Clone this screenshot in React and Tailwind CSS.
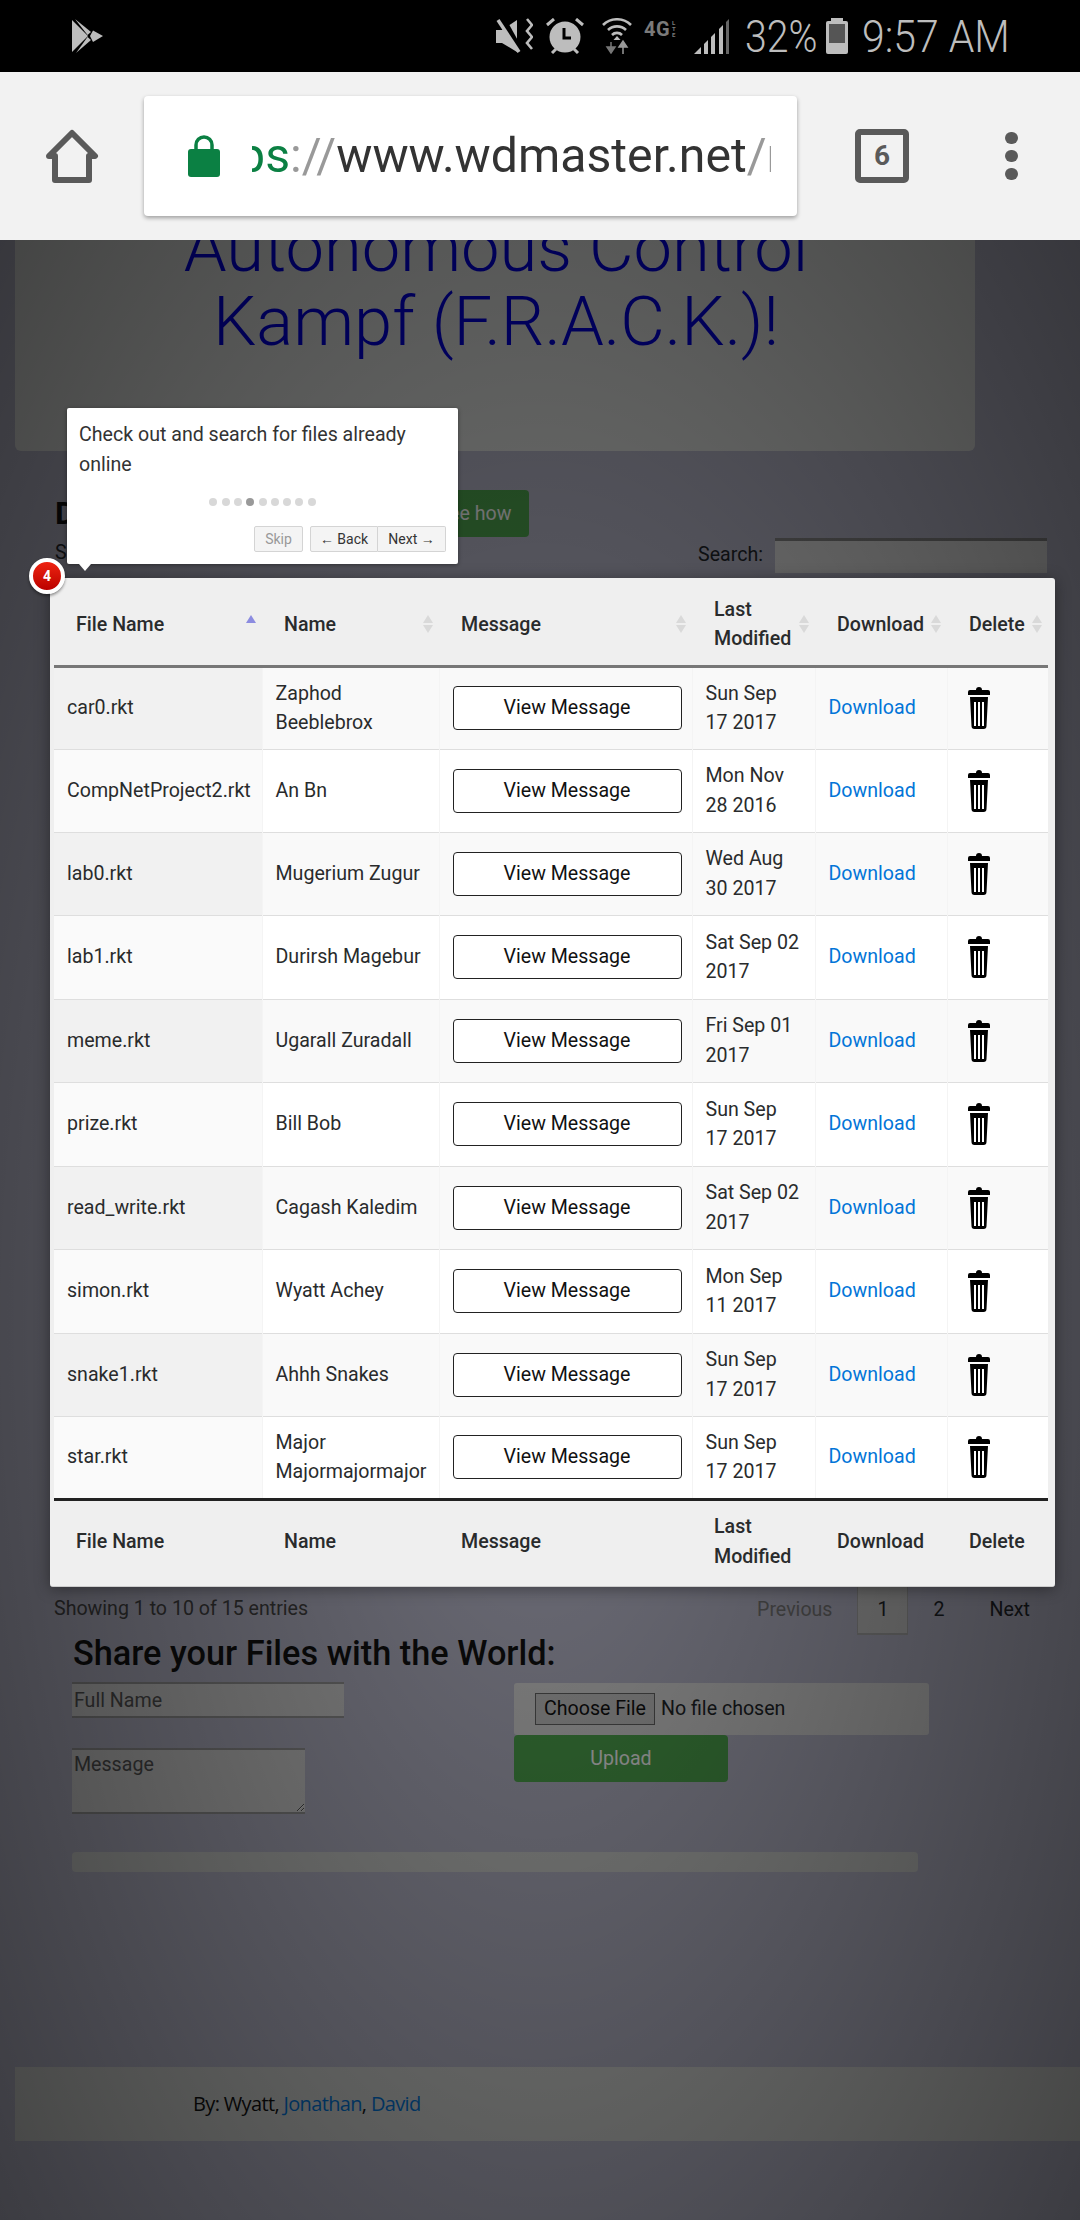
import React from 'react'

const rows = [
  ['car0.rkt', 'Zaphod Beeblebrox', 'Sun Sep 17 2017'],
  ['CompNetProject2.rkt', 'An Bn', 'Mon Nov 28 2016'],
  ['lab0.rkt', 'Mugerium Zugur', 'Wed Aug 30 2017'],
  ['lab1.rkt', 'Durirsh Magebur', 'Sat Sep 02 2017'],
  ['meme.rkt', 'Ugarall Zuradall', 'Fri Sep 01 2017'],
  ['prize.rkt', 'Bill Bob', 'Sun Sep 17 2017'],
  ['read_write.rkt', 'Cagash Kaledim', 'Sat Sep 02 2017'],
  ['simon.rkt', 'Wyatt Achey', 'Mon Sep 11 2017'],
  ['snake1.rkt', 'Ahhh Snakes', 'Sun Sep 17 2017'],
  ['star.rkt', 'Major Majormajormajor', 'Sun Sep 17 2017'],
]

const headers = ['File Name', 'Name', 'Message', 'Last Modified', 'Download', 'Delete']

function SortArrows({ active }) {
  return (
    <svg className="w-[10px] h-[18px] shrink-0" viewBox="0 0 10 18">
      <path d="M5 0L10 8H0Z" fill={active ? '#8c8ce0' : '#d9d9d9'} />
      {!active && <path d="M5 18L10 10H0Z" fill="#d9d9d9" />}
    </svg>
  )
}

function Trash() {
  return (
    <svg className="w-[22px] h-[42px] block" viewBox="0 0 22 42">
      <path d="M8 3a3 3 0 0 1 6 0h6a2 2 0 0 1 2 2v3H0V5a2 2 0 0 1 2-2Z" fill="#000" />
      <path d="M2 10h18l-1.5 29a3 3 0 0 1-3 3h-9a3 3 0 0 1-3-3Z" fill="#000" />
      <path d="M6 15h2v24H6ZM10 15h2v24h-2ZM14 15h2v24h-2Z" fill="#fff" />
    </svg>
  )
}

function StatusBar() {
  return (
    <div className="h-[72px] bg-black flex items-center pl-[72px] pr-[74px] text-[#bdbdbd]">
      <svg className="w-[31px] h-[34px]" viewBox="0 0 31 34" fill="#bdbdbd">
        <path d="M0 1L16 17L0 33Z" />
        <path d="M3 0L19 13L15.5 16Z" />
        <path d="M21 11.5L31 17L21 23L18 17Z" />
        <path d="M4 34L19 21L15.5 18Z" />
      </svg>
      <div className="ml-auto flex items-center">
        <svg className="w-[37px] h-[36px]" viewBox="0 0 37 36" fill="none">
          <path d="M0 12h6L21 2v32L6 25H0Z" fill="#bdbdbd" />
          <path d="M6 0L26 36" stroke="#000" strokeWidth="6" />
          <path d="M2 2L23 34" stroke="#bdbdbd" strokeWidth="3.5" />
          <path d="M31 1l5 6-5 6 5 6-5 6 5 6" stroke="#bdbdbd" strokeWidth="2.6" />
        </svg>
        <svg className="w-[38px] h-[36px] ml-[13px]" viewBox="0 0 38 36" fill="none">
          <circle cx="19" cy="19" r="15.5" fill="#bdbdbd" />
          <path d="M18 10v10h7" stroke="#000" strokeWidth="3" />
          <path d="M1 7l7-6M37 7l-7-6M6 35l4-4M32 35l-4-4" stroke="#bdbdbd" strokeWidth="3" />
        </svg>
        <svg className="w-[30px] h-[36px] ml-[18px]" viewBox="0 0 30 36" fill="none">
          <path d="M1 7a20 20 0 0 1 28 0M6 12a13 13 0 0 1 18 0M10 17a7 7 0 0 1 10 0" stroke="#bdbdbd" strokeWidth="2.6" />
          <path d="M15 18l3.5 4h-7Z" fill="#bdbdbd" />
          <path d="M9 24v7M5 29h8l-4 6Z" fill="#777" stroke="#777" strokeWidth="1.5" />
          <path d="M21 36v-9M17 29h8l-4-6Z" fill="#999" stroke="#999" strokeWidth="1.5" />
        </svg>
        <div className="ml-[12px] w-[41px] h-[18px] -mt-[14px] flex items-center text-[#7a7a7a]">
          <span className="font-bold text-[20px] leading-[18px] tracking-[0.5px]">4G</span>
          <span className="flex flex-col text-[6px] leading-[6px] font-bold ml-[2px]">
            <span>L</span>
            <span>T</span>
            <span>E</span>
          </span>
        </div>
        <svg className="w-[35px] h-[35px] ml-[9px]" viewBox="0 0 35 35">
          <path d="M0 35L7 28V35Z" fill="#bdbdbd" />
          <path d="M10 25l4-4v14h-4ZM17 18l4-4v21h-4Z" fill="#bdbdbd" />
          <path d="M25 10l4-4v29h-4Z" fill="#bdbdbd" />
          <path d="M32 3l3-3v35h-3Z" fill="#666" />
        </svg>
        <span className="ml-[16px] w-[70px] block text-[45px] leading-[45px] font-light">
          <span className="inline-block origin-left scale-x-[0.87] whitespace-nowrap">32%</span>
        </span>
        <div className="ml-[11px] w-[22px] h-[36px] flex flex-col items-center">
          <div className="w-[12px] h-[3px] bg-[#bdbdbd]" />
          <div className="w-[22px] h-[33px] bg-[#bdbdbd] rounded-[2px] pt-[3px] px-[3px]">
            <div className="h-[19px] bg-[#555]" />
          </div>
        </div>
        <span className="ml-[14px] w-[144px] block text-[45px] leading-[45px] font-light">
          <span className="inline-block origin-left scale-x-[0.91] whitespace-nowrap">9:57 AM</span>
        </span>
      </div>
    </div>
  )
}

function BrowserBar() {
  return (
    <div className="h-[168px] bg-[#f2f2f2] flex items-center relative z-40">
      <svg className="w-[54px] h-[54px] ml-[45px]" viewBox="0 0 54 54" fill="none">
        <path d="M27 4L50 27H44V51H10V27H4Z" stroke="#5a5a5a" strokeWidth="6" strokeLinejoin="round" />
      </svg>
      <div className="ml-[45px] w-[653px] h-[120px] bg-white rounded-[4px] shadow-[0_2px_4px_rgba(0,0,0,0.35)] flex items-center pl-[44px]">
        <svg className="w-[32px] h-[42px] shrink-0" viewBox="0 0 32 42">
          <path d="M8 16V10a8 8 0 0 1 16 0v6" fill="none" stroke="#0b8043" strokeWidth="3.5" />
          <rect x="0" y="14" width="32" height="28" rx="3" fill="#0b8043" />
        </svg>
        <div className="ml-[32px] w-[519px] overflow-hidden whitespace-nowrap text-[48.2px] leading-[60px] text-[#333]">
          <span className="inline-block -ml-[72px]">
            <span className="text-[#0b8043]">https</span>
            <span className="text-[#999]">://</span>
            www.wdmaster.net
            <span className="text-[#999]">/rkt</span>
          </span>
        </div>
      </div>
      <div className="ml-[58px] w-[54px] h-[54px] border-[6px] border-[#5a5a5a] rounded-[5px] flex items-center justify-center text-[#5a5a5a] font-bold text-[28px] leading-none">
        6
      </div>
      <div className="ml-[96px] flex flex-col items-center gap-[6px]">
        <span className="w-[13px] h-[12px] rounded-full bg-[#5a5a5a]" />
        <span className="w-[13px] h-[12px] rounded-full bg-[#5a5a5a]" />
        <span className="w-[13px] h-[12px] rounded-full bg-[#5a5a5a]" />
      </div>
    </div>
  )
}

function FilesTable() {
  return (
    <div className="relative z-20 ml-[50px] w-[1005px] h-[1009px] bg-[#efefef] rounded-[3px] pl-[4px] border-b border-[#ccc] shadow-[0_2px_15px_rgba(0,0,0,0.4)]">
      <table className="w-[994px] table-fixed border-collapse text-[19.6px] leading-[29.5px] text-[#292b2c]">
        <colgroup>
          <col className="w-[208px]" />
          <col className="w-[177px]" />
          <col className="w-[253px]" />
          <col className="w-[123px]" />
          <col className="w-[132px]" />
          <col className="w-[101px]" />
        </colgroup>
        <thead>
          <tr className="h-[88px] border-b-[3px] border-[#777]">
            {headers.map((h, i) => (
              <th key={h} className="pl-[22px] pr-[6px] pt-[6px] text-left font-medium">
                <div className="flex items-center justify-between">
                  <span>{h}</span>
                  <SortArrows active={i === 0} />
                </div>
              </th>
            ))}
          </tr>
        </thead>
        <tbody>
          {rows.map((r, i) => {
            const odd = i % 2 === 0
            const tall = i === 3 || i === 5 || i === 7
            return (
              <tr
                key={r[0]}
                className={`${tall ? 'h-[84px]' : 'h-[83px]'} ${odd ? 'bg-[#f9f9f9]' : 'bg-white'} border-b border-[#dedede]`}
              >
                <td className={odd ? 'px-[13px] bg-[#f1f1f1]' : 'px-[13px] bg-[#fafafa]'}>{r[0]}</td>
                <td className="px-[13px] border-l border-[#f4f4f4]">{r[1]}</td>
                <td className="px-[13px] border-l border-[#f4f4f4]">
                  <button className="w-[229px] h-[44px] bg-white border-[1.5px] border-[#222] rounded-[4px] text-[#111]">View Message</button>
                </td>
                <td className="px-[13px] border-l border-[#f4f4f4]">{r[2]}</td>
                <td className="px-[13px] border-l border-[#f4f4f4] text-[#0275d8]">Download</td>
                <td className="pl-[20px] border-l border-[#f4f4f4]"><Trash /></td>
              </tr>
            )
          })}
        </tbody>
        <tfoot>
          <tr className="h-[86px] border-t-[3px] border-[#222]">
            {headers.map((h) => (
              <th key={h} className="pl-[22px] pr-[6px] pb-[2px] text-left font-medium">{h}</th>
            ))}
          </tr>
        </tfoot>
      </table>
    </div>
  )
}

function Tour() {
  return (
    <>
      <div className="absolute z-30 left-[67px] top-[168px] w-[391px] h-[156px] bg-white rounded-[2px] shadow-[0_1px_4px_rgba(0,0,0,0.4)] text-[#333]">
        <p className="pt-[12px] pl-[12px] pr-[12px] text-[19.6px] leading-[30px]">Check out and search for files already online</p>
        <div className="flex justify-center gap-[4.3px] mt-[18px]">
          {[0, 1, 2, 3, 4, 5, 6, 7, 8].map((d) => (
            <span key={d} className={d === 3 ? 'w-[8px] h-[8px] rounded-full bg-[#999]' : 'w-[8px] h-[8px] rounded-full bg-[#d8d8d8]'} />
          ))}
        </div>
        <div className="flex justify-end pr-[12px] mt-[20px] text-[14px] leading-[24px]">
          <span className="w-[49px] h-[26px] mr-[7px] bg-[#f4f4f4] border border-[#d4d4d4] rounded-[2px] text-center text-[#999]">Skip</span>
          <span className="w-[68px] h-[26px] bg-[#f4f4f4] border border-[#d4d4d4] rounded-l-[2px] text-center">← Back</span>
          <span className="w-[68px] h-[26px] bg-[#f4f4f4] border border-l-0 border-[#d4d4d4] rounded-r-[2px] text-center">Next →</span>
        </div>
      </div>
      <div className="absolute z-30 left-[79px] top-[324px] w-0 h-0 border-x-[6px] border-x-transparent border-t-[7px] border-t-white" />
      <div className="absolute z-30 left-[29px] top-[318px] w-[36px] h-[36px] rounded-full border-[4px] border-white bg-linear-to-b from-[#ee2211] to-[#bb0000] shadow-[0_2px_3px_rgba(0,0,0,0.4)] flex items-center justify-center text-white font-bold text-[14px]">
        4
      </div>
    </>
  )
}

export default function App() {
  return (
    <div className="w-[1080px] h-[2220px] overflow-hidden font-[Roboto,sans-serif] bg-black">
      <StatusBar />
      <BrowserBar />
      <div className="relative h-[1980px] bg-[#b9b9cb] text-[#212529] overflow-hidden">
        {/* tour overlay dims the whole page */}
        <div className="absolute inset-0 z-10 bg-[radial-gradient(ellipse_at_50%_55%,rgba(0,0,0,0.4)_0%,rgba(0,0,0,0.7)_100%)]" />

        {/* jumbotron */}
        <div className="ml-[15px] w-[960px] h-[211px] bg-[#e2e4e2] rounded-b-[6px] overflow-hidden">
          <h1 className="-mt-[29px] pl-[122px] pr-[120px] text-center text-[68.7px] leading-[74px] font-light text-[#0000e0]">
            Autonomous Control Kampf (F.R.A.C.K.)!
          </h1>
        </div>

        <div className="flex items-start ml-[55px] mt-[39px] h-[47px]">
          <h2 className="w-[365px] text-[32px] leading-[47px] font-bold text-[#111]">Download Files</h2>
          <span className="w-[109px] h-[47px] bg-[#4fa84f] rounded-[4px] text-center text-white text-[19.6px] leading-[47px]">See how</span>
        </div>

        <div className="flex items-start ml-[55px] h-[41px] text-[19.6px] leading-[29px]">
          <span className="pt-[1px]">Show 10 entries</span>
          <span className="ml-auto pt-[3px]">Search:</span>
          <input className="ml-[12px] mr-[33px] mt-[1px] w-[272px] h-[35px] bg-[#e4e4e4] border-t-[3px] border-[#888]" readOnly />
        </div>

        <FilesTable />

        <div className="flex ml-[54px] h-[48px] text-[19.6px] leading-[29px]">
          <span className="pt-[7px] text-[#444]">Showing 1 to 10 of 15 entries</span>
          <div className="ml-auto mr-[50px] flex">
            <span className="pt-[8px] mr-[25px] text-[#777]">Previous</span>
            <span className="w-[51px] h-[48px] pt-[8px] text-center bg-[#cacaca] border-x border-b-2 border-[#aaa]">1</span>
            <span className="pt-[8px] ml-[25px]">2</span>
            <span className="pt-[8px] ml-[45px]">Next</span>
          </div>
        </div>

        <h3 className="ml-[73px] mt-[-1px] h-[38px] text-[34.3px] leading-[38px] font-medium text-[#111]">Share your Files with the World:</h3>

        <div className="flex mt-[10px] ml-[72px]">
          <div className="w-[442px] flex flex-col items-start">
            <input className="w-[272px] h-[36px] bg-[#d8d8d8] border-t-2 border-b-2 border-[#999] px-[2px] text-[19.6px] placeholder:text-[#555]" placeholder="Full Name" readOnly />
            <textarea className="w-[233px] h-[66px] mt-[30px] bg-[#d8d8d8] border-t-2 border-b-2 border-[#999] px-[2px] text-[19.6px] leading-[29px] placeholder:text-[#555]" placeholder="Message" readOnly />
          </div>
          <div className="w-[415px] pt-[1px]">
            <div className="h-[52px] bg-[#dcdcdc] rounded-[3px] pl-[21px] pt-[10px] flex items-start">
              <input type="file" className="w-[380px] h-[32px] text-[19.6px] leading-[30px] text-[#212529] file:h-[32px] file:w-[120px] file:mr-[6px] file:bg-[#c8c8c8] file:border file:border-[#666] file:text-[#111]" />
            </div>
            <button className="w-[214px] h-[47px] bg-[#4fa84f] rounded-[4px] text-white text-[19.6px]">Upload</button>
          </div>
        </div>

        <div className="ml-[72px] mt-[38px] w-[846px] h-[20px] bg-[#d0d2d0] rounded-[4px]" />

        <div className="ml-[15px] mt-[195px] h-[74px] bg-[#d4d6d4] pl-[178px] flex items-center text-[20px] font-['Open_Sans',sans-serif] tracking-[-0.65px] text-[#111]">
          <span>By: Wyatt, <span className="text-[#0275d8]">Jonathan</span>, <span className="text-[#0275d8]">David</span></span>
        </div>

        <Tour />
      </div>
    </div>
  )
}
